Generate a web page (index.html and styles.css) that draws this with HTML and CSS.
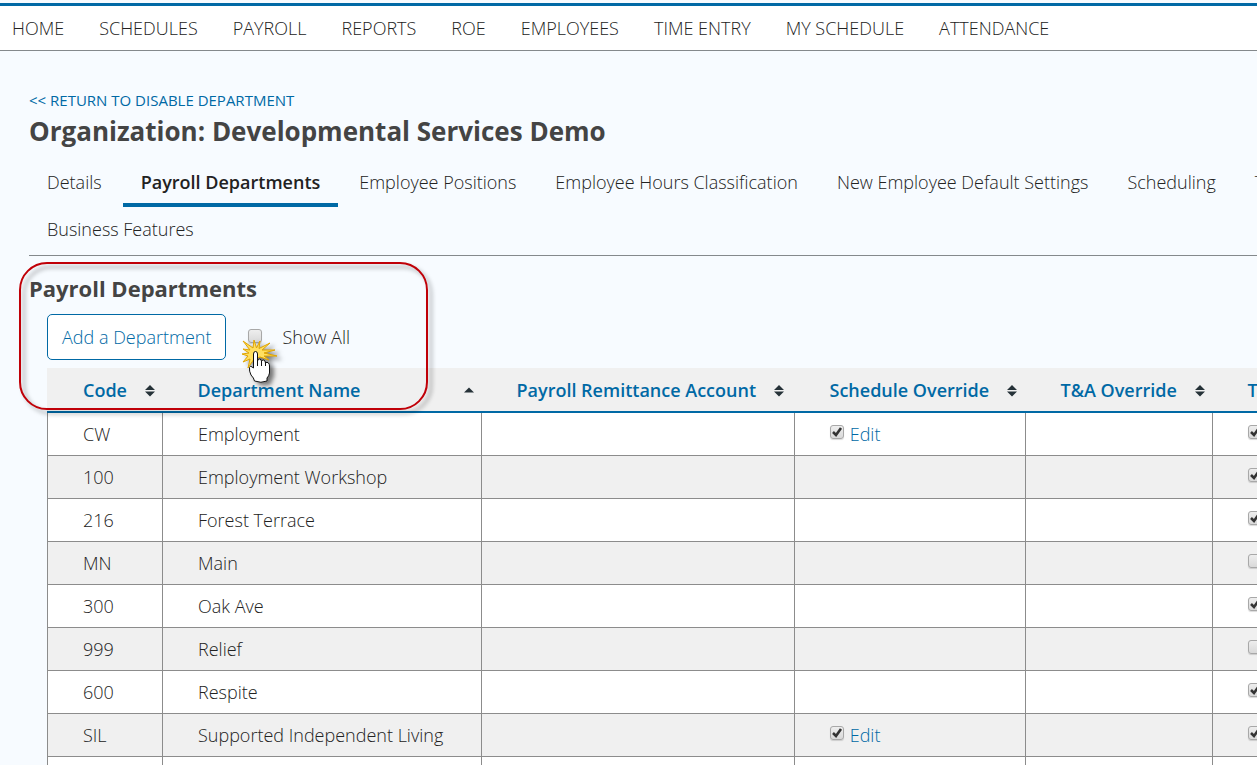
FILE: index.html
```html
<!doctype html>
<html lang="en">
<head>
    <meta charset="UTF-8">
    <meta name="viewport" content="width=device-width, initial-scale=1.0">
    <title>Payroll Departments</title>
    <link rel="stylesheet" href="styles.css">
</head>
<body>
<svg class="symbols" aria-hidden="true">
    <symbol id="sort-both" viewBox="0 0 10 12">
        <path d="M5 0 L10 5 H0 Z M0 6.500 H10 L5 11.500 Z"/>
    </symbol>
    <symbol id="sort-up" viewBox="0 0 10 12">
        <path d="M5 3.500 L10 8.500 H0 Z"/>
    </symbol>
</svg>
<nav class="main-nav">
    <a href="#">HOME</a>
    <a href="#">SCHEDULES</a>
    <a href="#">PAYROLL</a>
    <a href="#">REPORTS</a>
    <a href="#">ROE</a>
    <a href="#">EMPLOYEES</a>
    <a href="#">TIME ENTRY</a>
    <a href="#">MY SCHEDULE</a>
    <a href="#">ATTENDANCE</a>
</nav>
<main class="content">
    <a class="return" href="#">&lt;&lt; RETURN TO DISABLE DEPARTMENT</a>
    <h1>Organization: Developmental Services Demo</h1>
    <nav class="tabs">
        <a href="#">Details</a>
        <a href="#" class="active">Payroll Departments</a>
        <a href="#">Employee Positions</a>
        <a href="#">Employee Hours Classification</a>
        <a href="#">New Employee Default Settings</a>
        <a href="#">Scheduling</a>
        <a href="#">T&amp;A</a>
        <a href="#">Business Features</a>
    </nav>
    <section class="departments">
        <h2>Payroll Departments</h2>
        <div class="toolbar">
            <button type="button" class="add">Add a Department</button>
            <div class="show-all">
                <input type="checkbox" id="show_all">
                <label for="show_all">Show All</label>
                <svg class="pointer" viewBox="0 0 36 48" aria-hidden="true">
                    <path class="pointer-spark" d="M11 8 L12 0 L14.500 8 L18 1 L17 8.500 L28 3 L20 10 L33 10 L22 13 L35 16 L22 16 L27 20 L18 17 L12 19 L6 28 L8 19 L1 22 L6 16 L0 14 L7 13 L1 9 L8 10 L1 1 Z"/>
                    <path class="pointer-hand" d="M11.500 28 V14 Q11.500 11.500 13.500 11.500 Q15.500 11.500 15.500 14 V21 Q16 19 17.500 19 Q19.500 19 19.500 21.500 Q20 20 21.500 20 Q23.500 20.500 23.500 23 Q25 21.500 26.500 23 Q27.500 24 27.500 26 V33 Q27 36 25 38 V41 Q19 43.500 12.500 41 Q12 38 9 35 Q7 31 7.500 27.500 Q8.500 25 10 27 Z"/>
                    <path class="pointer-lines" d="M15.500 20 V26 M19.500 21 V26 M23.500 22 V26"/>
                </svg>
            </div>
        </div>
        <table>
            <colgroup>
                <col class="code">
                <col class="name">
                <col class="account">
                <col class="schedule">
                <col class="ta">
                <col class="last">
            </colgroup>
            <thead>
            <tr>
                <th>Code<svg class="sort"><use href="#sort-both"/></svg></th>
                <th><div class="spread">Department Name<svg class="sort"><use href="#sort-up"/></svg></div></th>
                <th>Payroll Remittance Account<svg class="sort"><use href="#sort-both"/></svg></th>
                <th>Schedule Override<svg class="sort"><use href="#sort-both"/></svg></th>
                <th>T&amp;A Override<svg class="sort"><use href="#sort-both"/></svg></th>
                <th>T&amp;A</th>
            </tr>
            </thead>
            <tbody>
            <tr>
                <td>CW</td>
                <td>Employment</td>
                <td></td>
                <td><input type="checkbox" aria-label="Schedule override" checked> <a href="#">Edit</a></td>
                <td></td>
                <td><input type="checkbox" aria-label="T&amp;A" checked></td>
            </tr>
            <tr>
                <td>100</td>
                <td>Employment Workshop</td>
                <td></td>
                <td></td>
                <td></td>
                <td><input type="checkbox" aria-label="T&amp;A" checked></td>
            </tr>
            <tr>
                <td>216</td>
                <td>Forest Terrace</td>
                <td></td>
                <td></td>
                <td></td>
                <td><input type="checkbox" aria-label="T&amp;A" checked></td>
            </tr>
            <tr>
                <td>MN</td>
                <td>Main</td>
                <td></td>
                <td></td>
                <td></td>
                <td><input type="checkbox" aria-label="T&amp;A"></td>
            </tr>
            <tr>
                <td>300</td>
                <td>Oak Ave</td>
                <td></td>
                <td></td>
                <td></td>
                <td><input type="checkbox" aria-label="T&amp;A" checked></td>
            </tr>
            <tr>
                <td>999</td>
                <td>Relief</td>
                <td></td>
                <td></td>
                <td></td>
                <td><input type="checkbox" aria-label="T&amp;A"></td>
            </tr>
            <tr>
                <td>600</td>
                <td>Respite</td>
                <td></td>
                <td></td>
                <td></td>
                <td><input type="checkbox" aria-label="T&amp;A" checked></td>
            </tr>
            <tr>
                <td>SIL</td>
                <td>Supported Independent Living</td>
                <td></td>
                <td><input type="checkbox" aria-label="Schedule override" checked> <a href="#">Edit</a></td>
                <td></td>
                <td><input type="checkbox" aria-label="T&amp;A" checked></td>
            </tr>
            <tr>
                <td></td>
                <td></td>
                <td></td>
                <td></td>
                <td></td>
                <td></td>
            </tr>
            </tbody>
        </table>
        <div class="callout"></div>
    </section>
</main>
</body>
</html>
```

FILE: styles.css
```css
* {
    box-sizing: border-box;
}

body {
    margin: 0;
    height: 100vh;
    overflow: hidden;
    background-color: #f7fbff;
    color: #222222;
    font-family: "Open Sans", sans-serif;
    font-size: 18px;
    font-weight: 300;
    line-height: 24px;
}

a {
    color: #0069a5;
    text-decoration: none;
}

.symbols {
    display: none;
}

/* Top menu */
.main-nav {
    display: flex;
    gap: 35px;
    margin-top: 3px;
    padding: 10px 12px;
    border-top: 3px solid #0069a5;
    border-bottom: 1px solid #84898c;
    background-color: #ffffff;
    white-space: nowrap;
}

.main-nav a {
    color: #222222;
}

/* The page is wider than the window, the rest is cut off on the right */
.content {
    margin-right: -120px;
    padding: 37px 0 0 29px;
}

.return {
    display: block;
    font-size: 15px;
    font-weight: 400;
}

h1 {
    margin: 1px 0 0;
    color: #444444;
    font-size: 26px;
    line-height: 36px;
}

.tabs {
    display: flex;
    flex-wrap: wrap;
    column-gap: 3px;
    margin-top: 11px;
    padding-bottom: 1px;
    border-bottom: 1px solid #84898c;
}

.tabs a {
    padding: 10px 18px 9px;
    border-bottom: 4px solid transparent;
    color: #222222;
}

.tabs a.active {
    border-bottom-color: #0069a5;
    font-weight: 600;
}

.departments {
    position: relative;
    padding-top: 17px;
}

h2 {
    margin: 0;
    color: #444444;
    font-size: 22px;
    line-height: 30px;
}

.toolbar {
    display: flex;
    align-items: center;
    margin: 11px 0 8px 18px;
}

.add {
    height: 46px;
    padding: 0 14px;
    border: 1px solid #0069a5;
    border-radius: 5px;
    background-color: #ffffff;
    color: #0069a5;
    font: inherit;
    cursor: pointer;
}

.show-all {
    position: relative;
    display: flex;
    gap: 20px;
    margin-left: 22px;
}

/* Checkbox Style */
input[type="checkbox"] {
    appearance: none;
    -webkit-appearance: none;
    width: 14px;
    height: 14px;
    margin: 4px 0 0;
    border: 1px solid #a8a8a8;
    border-radius: 3px;
    background: linear-gradient(#eeeeee, #d9d9d9);
    box-shadow: 0 1px 1px rgba(0, 0, 0, 0.15);
}

td input[type="checkbox"]:checked {
    background: url("data:image/svg+xml,%3Csvg xmlns='http://www.w3.org/2000/svg' viewBox='0 0 12 12'%3E%3Cpath d='M2 6 L5 9 L10 2' fill='none' stroke='%23333' stroke-width='2.600'/%3E%3C/svg%3E"), linear-gradient(#eeeeee, #d9d9d9);
}

/* Departments table */
table {
    width: 1320px;
    margin-left: 18px;
    border-collapse: collapse;
    table-layout: fixed;
    background-color: #ffffff;
}

.code {
    width: 115px;
}

.name {
    width: 319px;
}

.account {
    width: 313px;
}

.schedule {
    width: 231px;
}

.ta {
    width: 187px;
}

th {
    height: 44px;
    padding: 0 0 0 35px;
    border-bottom: 2px solid #0069a5;
    background-color: #f0f0f0;
    color: #0069a5;
    font-weight: 600;
    text-align: left;
    white-space: nowrap;
}

th:first-child {
    border-left: 1px solid #f0f0f0;
}

td {
    height: 43px;
    padding: 0 0 0 35px;
    border: 1px solid #8c8c8c;
}

tbody tr:nth-child(even) {
    background-color: #f0f0f0;
}

td input[type="checkbox"] {
    margin-right: 1px;
    vertical-align: 2px;
}

.sort {
    width: 10px;
    height: 12px;
    margin-left: 18px;
    fill: #263238;
}

.spread {
    display: flex;
    align-items: center;
    justify-content: space-between;
    padding-right: 8px;
}

/* Highlight and mouse pointer over the page */
.callout {
    position: absolute;
    top: 6px;
    left: -10px;
    width: 409px;
    height: 148px;
    border: 2px solid #c00008;
    border-radius: 28px;
    filter: drop-shadow(4px 4px 2px rgba(0, 0, 0, 0.35));
    pointer-events: none;
}

.pointer {
    position: absolute;
    top: 15px;
    left: -6px;
    width: 36px;
    height: 48px;
    overflow: visible;
    filter: drop-shadow(4px 3px 2px rgba(0, 0, 0, 0.5));
    pointer-events: none;
}

.pointer-spark {
    fill: #ffdf60;
    stroke: #e0a400;
}

.pointer-hand {
    fill: #ffffff;
    stroke: #111111;
}

.pointer-lines {
    fill: none;
    stroke: #111111;
}
```
